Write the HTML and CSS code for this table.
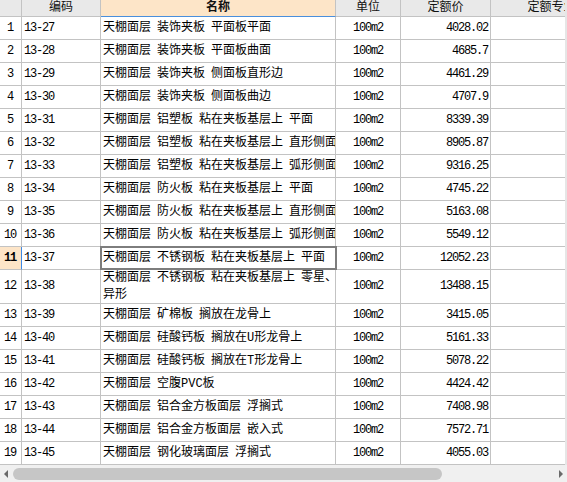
FILE: index.html
```html
<!DOCTYPE html>
<html lang="zh-CN">
<head>
<meta charset="utf-8">
<title>定额列表</title>
<link rel="stylesheet" href="styles.css">
</head>
<body>
<div class="frame">
  <div class="view">
    <div class="grid">
      <div class="hd"></div>
      <div class="hd"><span>编码</span></div>
      <div class="hd hd-sel"><span>名称</span></div>
      <div class="hd"><span>单位</span></div>
      <div class="hd"><span>定额价</span></div>
      <div class="hd"><span>定额专业</span></div>

      <div class="c rn">1</div><div class="c code">13-27</div><div class="c name">天棚面层 装饰夹板 平面板平面</div><div class="c unit">100m2</div><div class="c price">4028.02</div><div class="c"></div>
      <div class="c rn">2</div><div class="c code">13-28</div><div class="c name">天棚面层 装饰夹板 平面板曲面</div><div class="c unit">100m2</div><div class="c price">4685.7</div><div class="c"></div>
      <div class="c rn">3</div><div class="c code">13-29</div><div class="c name">天棚面层 装饰夹板 侧面板直形边</div><div class="c unit">100m2</div><div class="c price">4461.29</div><div class="c"></div>
      <div class="c rn">4</div><div class="c code">13-30</div><div class="c name">天棚面层 装饰夹板 侧面板曲边</div><div class="c unit">100m2</div><div class="c price">4707.9</div><div class="c"></div>
      <div class="c rn">5</div><div class="c code">13-31</div><div class="c name">天棚面层 铝塑板 粘在夹板基层上 平面</div><div class="c unit">100m2</div><div class="c price">8339.39</div><div class="c"></div>
      <div class="c rn">6</div><div class="c code">13-32</div><div class="c name">天棚面层 铝塑板 粘在夹板基层上 直形侧面</div><div class="c unit">100m2</div><div class="c price">8905.87</div><div class="c"></div>
      <div class="c rn">7</div><div class="c code">13-33</div><div class="c name">天棚面层 铝塑板 粘在夹板基层上 弧形侧面</div><div class="c unit">100m2</div><div class="c price">9316.25</div><div class="c"></div>
      <div class="c rn">8</div><div class="c code">13-34</div><div class="c name">天棚面层 防火板 粘在夹板基层上 平面</div><div class="c unit">100m2</div><div class="c price">4745.22</div><div class="c"></div>
      <div class="c rn">9</div><div class="c code">13-35</div><div class="c name">天棚面层 防火板 粘在夹板基层上 直形侧面</div><div class="c unit">100m2</div><div class="c price">5163.08</div><div class="c"></div>
      <div class="c rn">10</div><div class="c code">13-36</div><div class="c name">天棚面层 防火板 粘在夹板基层上 弧形侧面</div><div class="c unit">100m2</div><div class="c price">5549.12</div><div class="c"></div>
      <div class="c rn rn-sel">11</div><div class="c code">13-37</div><div class="c name cell-sel">天棚面层 不锈钢板 粘在夹板基层上 平面</div><div class="c unit">100m2</div><div class="c price">12052.23</div><div class="c"></div>
      <div class="c rn">12</div><div class="c code">13-38</div><div class="c name">天棚面层 不锈钢板 粘在夹板基层上 零星、<br>异形</div><div class="c unit">100m2</div><div class="c price">13488.15</div><div class="c"></div>
      <div class="c rn">13</div><div class="c code">13-39</div><div class="c name">天棚面层 矿棉板 搁放在龙骨上</div><div class="c unit">100m2</div><div class="c price">3415.05</div><div class="c"></div>
      <div class="c rn">14</div><div class="c code">13-40</div><div class="c name">天棚面层 硅酸钙板 搁放在U形龙骨上</div><div class="c unit">100m2</div><div class="c price">5161.33</div><div class="c"></div>
      <div class="c rn">15</div><div class="c code">13-41</div><div class="c name">天棚面层 硅酸钙板 搁放在T形龙骨上</div><div class="c unit">100m2</div><div class="c price">5078.22</div><div class="c"></div>
      <div class="c rn">16</div><div class="c code">13-42</div><div class="c name">天棚面层 空腹PVC板</div><div class="c unit">100m2</div><div class="c price">4424.42</div><div class="c"></div>
      <div class="c rn">17</div><div class="c code">13-43</div><div class="c name">天棚面层 铝合金方板面层 浮搁式</div><div class="c unit">100m2</div><div class="c price">7408.98</div><div class="c"></div>
      <div class="c rn">18</div><div class="c code">13-44</div><div class="c name">天棚面层 铝合金方板面层 嵌入式</div><div class="c unit">100m2</div><div class="c price">7572.71</div><div class="c"></div>
      <div class="c rn">19</div><div class="c code">13-45</div><div class="c name">天棚面层 钢化玻璃面层 浮搁式</div><div class="c unit">100m2</div><div class="c price">4055.03</div><div class="c"></div>
    </div>
  </div>
  <div class="vstrip"></div>
</div>
<div class="hscroll">
  <div class="arrow arrow-l"></div>
  <div class="track"><div class="thumb"></div></div>
  <div class="arrow arrow-r"></div>
</div>
</body>
</html>
```

FILE: styles.css
```css
html, body {
  margin: 0;
  padding: 0;
  background: #ffffff;
}
body {
  width: 567px;
  height: 482px;
  overflow: hidden;
  font-family: "Liberation Mono", "Noto Sans CJK SC", monospace;
  font-size: 12px;
  color: #000;
}
.frame {
  display: flex;
  height: 465px;
}
.view {
  width: 565px;
  height: 465px;
  overflow: hidden;
}
.vstrip {
  width: 2px;
  background: #e6e6e6;
}
.grid {
  display: grid;
  width: 613px;
  grid-template-columns: 22px 79px 235px 65px 90px 122px;
  grid-template-rows: 17px repeat(11, 23px) 34px repeat(7, 23px);
}
.hd, .c {
  box-sizing: border-box;
  border-right: 1px solid #c3c3c3;
  border-bottom: 1px solid #c3c3c3;
  display: flex;
  white-space: nowrap;
  overflow: hidden;
}
.hd {
  background: #e9e9e9;
  justify-content: center;
  align-items: flex-start;
  font-family: "Noto Sans CJK SC", sans-serif;
  line-height: 13px;
  color: #111;
}
.hd span {
  margin-top: -1px;
}
.hd-sel {
  background: #fde5c8;
  border-bottom-color: #4a8fdc;
  font-weight: bold;
}
.c {
  align-items: center;
  line-height: 17px;
}
.rn {
  justify-content: center;
  letter-spacing: -1.2px;
  padding-right: 1px;
}
.rn-sel {
  background: #fde5c8;
  border-right-color: #3f8ae6;
  font-weight: bold;
}
.code {
  padding-left: 2px;
  letter-spacing: -1.2px;
}
.name {
  padding-left: 2px;
  word-spacing: -1.2px;
}
.unit {
  justify-content: center;
  letter-spacing: -1.2px;
}
.price {
  justify-content: flex-end;
  padding-right: 2px;
  letter-spacing: -1.2px;
}
.cell-sel {
  position: relative;
  overflow: visible;
}
.cell-sel::after {
  content: "";
  position: absolute;
  top: -1px;
  left: -1px;
  right: -2px;
  bottom: -1px;
  border: 2px solid #7d7d7d;
  z-index: 2;
}
.hscroll {
  height: 17px;
  background: #f0f0f0;
  display: flex;
  align-items: center;
}
.arrow {
  width: 13px;
  height: 17px;
  position: relative;
}
.arrow-l::before, .arrow-r::before {
  content: "";
  position: absolute;
  top: 5px;
  border-top: 4px solid transparent;
  border-bottom: 4px solid transparent;
}
.arrow-l::before {
  left: 4px;
  border-right: 4px solid #6a6a6a;
}
.arrow-r::before {
  right: 4px;
  border-left: 4px solid #6a6a6a;
}
.track {
  flex: 1;
  height: 17px;
  display: flex;
  align-items: center;
}
.thumb {
  width: 429px;
  height: 12px;
  border-radius: 6px;
  background: #c6c6c6;
}
```
